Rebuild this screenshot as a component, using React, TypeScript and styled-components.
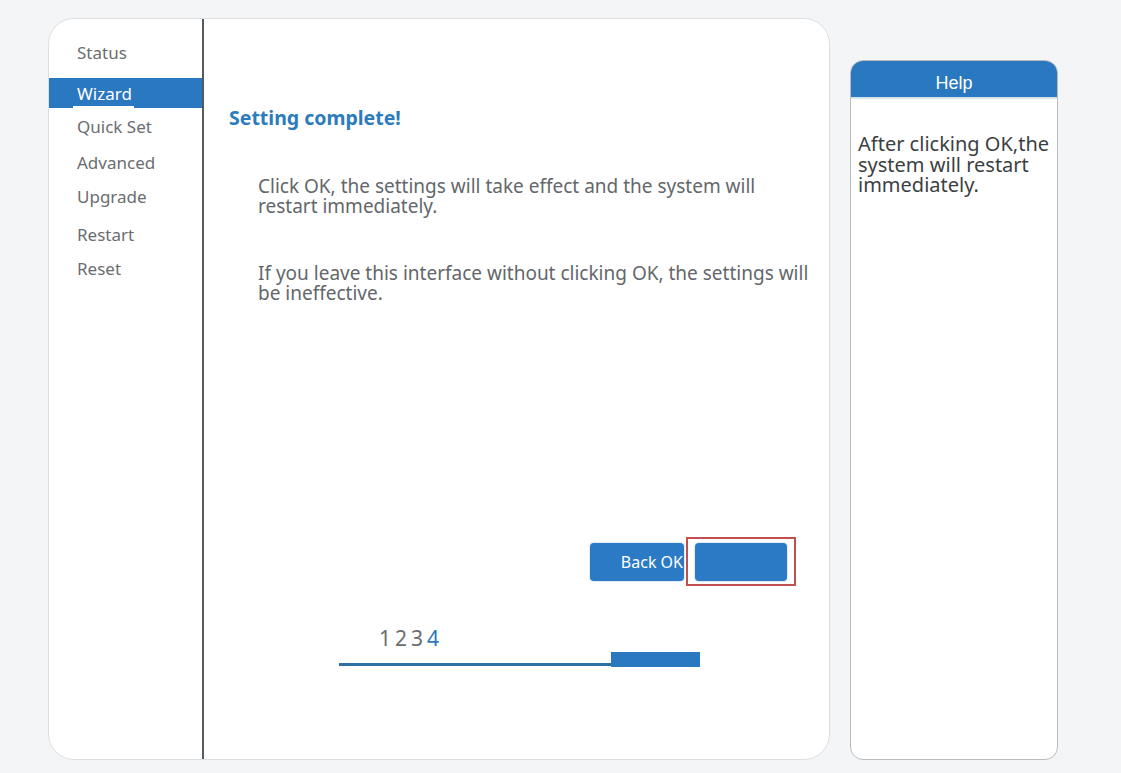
import React from "react";
import styled, { createGlobalStyle } from "styled-components";

const Global = createGlobalStyle`
  html, body {
    margin: 0;
    padding: 0;
    background: #f3f5f7;
  }
  body {
    font-family: "Noto Sans", "Open Sans", sans-serif;
  }
`;

const Page = styled.div`
  display: flex;
  align-items: flex-start;
  padding: 18px 0 0 48px;
  height: 773px;
  box-sizing: border-box;
`;

const MainPanel = styled.div`
  display: flex;
  width: 782px;
  height: 742px;
  background: #ffffff;
  border: 1px solid #dcdfe2;
  border-radius: 26px;
  box-sizing: border-box;
  overflow: hidden;
`;

const Sidebar = styled.nav`
  width: 153px;
  flex: none;
  border-right: 2px solid #555a5e;
  padding-top: 21px;
  display: flex;
  flex-direction: column;
`;

const NavItem = styled.div<{ $active?: boolean; $h: number; $mt?: number }>`
  height: ${(p) => p.$h}px;
  margin-top: ${(p) => p.$mt ?? 0}px;
  display: flex;
  align-items: center;
  padding-left: 28px;
  font-size: 17px;
  color: ${(p) => (p.$active ? "#ffffff" : "#6a6d70")};
  background: ${(p) => (p.$active ? "#2a78c0" : "transparent")};
`;

const ActiveLabel = styled.span`
  position: relative;
  &::after {
    content: "";
    position: absolute;
    left: -4px;
    right: -2px;
    bottom: -3px;
    height: 2px;
    background: #ffffff;
  }
`;

const Content = styled.section`
  flex: 1;
  display: flex;
  flex-direction: column;
  padding: 87px 0 0 25px;
`;

const Title = styled.h2`
  margin: 0;
  font-size: 19.5px;
  line-height: 24px;
  font-weight: 700;
  color: #2b7bbd;
`;

const Paragraph = styled.p<{ $top: number }>`
  margin: ${(p) => p.$top}px 0 0 29px;
  width: 558px;
  font-size: 19px;
  line-height: 20px;
  color: #63676b;
`;

const ButtonRow = styled.div`
  display: flex;
  align-items: center;
  gap: 2px;
  margin: 234px 0 0 361px;
`;

const Button = styled.button`
  width: 94px;
  height: 38px;
  border: none;
  border-radius: 4px;
  background: #2a7ac5;
  color: #ffffff;
  font-family: inherit;
  font-size: 16px;
  padding: 0 1px 0 0;
  text-align: right;
  box-shadow: 0 0 2px rgba(42, 122, 197, 0.5);
`;

const FocusRing = styled.div`
  border: 2px solid #c0504f;
  padding: 4px 7px 3px 7px;
  display: flex;
`;

const PrimaryButton = styled(Button)`
  width: 92px;
`;

const Steps = styled.div`
  margin: 40px 0 0 150px;
  font-size: 21px;
  line-height: 24px;
  letter-spacing: 4px;
  color: #6a6d70;
`;

const Current = styled.span`
  color: #2f78b8;
`;

const Track = styled.div`
  margin: 2px 0 0 110px;
  display: flex;
  align-items: flex-end;
  width: 361px;
`;

const TrackLine = styled.div`
  flex: 1;
  height: 3px;
  margin-bottom: 1px;
  background: #2e6fa7;
`;

const TrackFill = styled.div`
  width: 89px;
  height: 15px;
  background: #2a78c0;
`;

const HelpPanel = styled.aside`
  margin: 42px 0 0 20px;
  width: 208px;
  height: 700px;
  background: #ffffff;
  border: 1px solid #b9bcbf;
  border-radius: 13px;
  box-sizing: border-box;
  overflow: hidden;
  display: flex;
  flex-direction: column;
`;

const HelpHeader = styled.div`
  height: 38px;
  padding-top: 8px;
  box-sizing: border-box;
  background: #2a78c0;
  color: #ffffff;
  display: flex;
  align-items: center;
  justify-content: center;
  font-family: "Liberation Sans", Arial, sans-serif;
  font-size: 18px;
  border-bottom: 2px solid #d7e3ee;
`;

const HelpText = styled.p`
  margin: 35px 0 0 7px;
  font-size: 20px;
  line-height: 20.5px;
  color: #3c3f42;
`;

const navItems: { label: string; h: number; mt?: number }[] = [
  { label: "Status", h: 24 },
  { label: "Wizard", h: 30, mt: 14 },
  { label: "Quick Set", h: 36 },
  { label: "Advanced", h: 36 },
  { label: "Upgrade", h: 32 },
  { label: "Restart", h: 44 },
  { label: "Reset", h: 24 },
];

export default function App() {
  return (
    <>
      <Global />
      <Page>
        <MainPanel>
          <Sidebar>
            {navItems.map((item) =>
              item.label === "Wizard" ? (
                <NavItem key={item.label} $active $h={item.h} $mt={item.mt}>
                  <ActiveLabel>{item.label}</ActiveLabel>
                </NavItem>
              ) : (
                <NavItem key={item.label} $h={item.h} $mt={item.mt}>
                  {item.label}
                </NavItem>
              )
            )}
          </Sidebar>
          <Content>
            <Title>Setting complete!</Title>
            <Paragraph $top={46}>
              Click OK, the settings will take effect and the system will restart immediately.
            </Paragraph>
            <Paragraph $top={47}>
              If you leave this interface without clicking OK, the settings will be ineffective.
            </Paragraph>
            <ButtonRow>
              <Button>Back OK</Button>
              <FocusRing>
                <PrimaryButton />
              </FocusRing>
            </ButtonRow>
            <Steps>
              123<Current>4</Current>
            </Steps>
            <Track>
              <TrackLine />
              <TrackFill />
            </Track>
          </Content>
        </MainPanel>
        <HelpPanel>
          <HelpHeader>Help</HelpHeader>
          <HelpText>After clicking OK,the system will restart immediately.</HelpText>
        </HelpPanel>
      </Page>
    </>
  );
}
